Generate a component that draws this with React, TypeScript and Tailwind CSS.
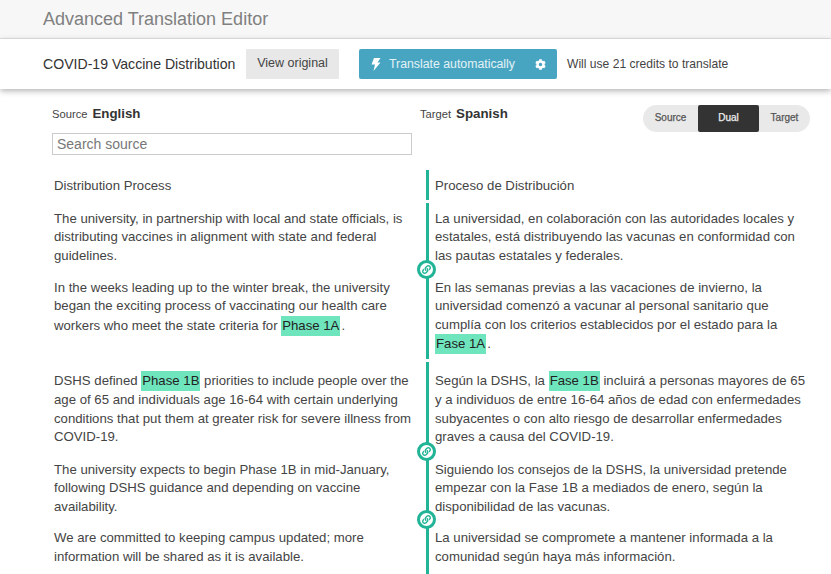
import { FaCog, FaLink } from "react-icons/fa";

const Mark = ({ children }: { children: string }) => (
    <span className="inline-block h-5 leading-5 px-px bg-[#6fe5bd] text-[#222]">{children}</span>
);

const Period = () => <span className="ml-[1px]">.</span>;

const LinkDot = () => (
    <span className="absolute left-[-12px] bottom-[-6px] z-10 w-[19px] h-[19px] rounded-full bg-white border-[3px] border-[#21b496] flex items-center justify-center text-[#21b496]">
        <FaLink size={9} />
    </span>
);

function Row({ left, right, top, linked = false, }: {
    left: React.ReactNode; right: React.ReactNode; top: string; linked?: boolean;
}) {
    return (
        <div className="grid grid-cols-[426px_1fr]">
            <div className={`pl-[54px] pr-[14px] ${top}`}>{left}</div>
            <div className={`relative border-l-[3px] border-[#21b496] pl-[6px] pr-[22px] ${top}`}>
                {right}
                {linked && <LinkDot />}
            </div>
        </div>
    );
}

export default function App() {
    return (
        <div className="h-[574px] overflow-hidden bg-white text-[#444] font-['Liberation_Sans',Arial,sans-serif] text-[13.2px] leading-[18.5px]">
            {/* Title */}
            <div className="h-[39px] bg-[#f7f7f7] border-b border-[#e4e4e4] pl-[43px] pt-[8px] text-[18px] leading-[22px] text-[#808080]">
                Advanced Translation Editor
            </div>

            {/* Toolbar */}
            <div className="relative z-20 h-[50px] bg-white shadow-[0_2px_6px_rgba(0,0,0,0.3)] flex items-center pl-[43px]">
                <span className="w-[193px] text-[14.1px] text-[#333] whitespace-nowrap">COVID-19 Vaccine Distribution</span>
                <button className="ml-[10px] w-[93px] h-[30px] mb-[1px] bg-[#e8e8e8] text-[12.5px] text-[#444] rounded-[1px]">View original</button>
                <button className="ml-[20px] w-[198px] h-[30px] bg-[#47a5c1] text-white/85 text-[12.3px] rounded-[2px] flex items-center pl-[12px]">
                    <svg width="10" height="13" viewBox="0 0 10 13" className="text-white" fill="currentColor">
                        <polygon points="3,0 9.5,0 6.5,4.5 9.5,4.5 2.5,13 4,6.5 0.5,6.5" />
                    </svg>
                    <span className="ml-[8px]">Translate automatically</span>
                    <FaCog size={11} className="ml-[20px] text-white" />
                </button>
                <span className="ml-[10px] text-[12.1px] text-[#444]">Will use 21 credits to translate</span>
            </div>

            {/* Languages */}
            <div className="relative pt-[16px] h-[81px]">
                <div className="grid grid-cols-[420px_1fr]">
                    <div className="pl-[52px] flex flex-col">
                        <div className="flex items-baseline gap-[5px] h-[20px]">
                            <span className="text-[11.2px]">Source</span>
                            <span className="text-[13.3px] font-bold text-[#333]">English</span>
                        </div>
                        <input
                            readOnly
                            placeholder="Search source"
                            className="mt-[8px] w-[360px] h-[22px] border border-[#ccc] px-[4px] text-[14px] outline-none placeholder:text-[#777]"
                        />
                    </div>
                    <div className="flex items-start justify-between pr-[21px]">
                        <div className="flex items-baseline gap-[5px] h-[20px]">
                            <span className="text-[11.2px]">Target</span>
                            <span className="text-[13.3px] font-bold text-[#333]">Spanish</span>
                        </div>
                        <div className="flex h-[27px] text-[10px] [-webkit-text-stroke:0.25px] rounded-full bg-[#e9e9e9] text-[#555] items-center">
                            <span className="w-[55px] text-center">Source</span>
                            <span className="w-[61px] h-full flex items-center justify-center bg-[#333] text-[#eee] rounded-[2px]">Dual</span>
                            <span className="w-[51px] text-center">Target</span>
                        </div>
                    </div>
                </div>
            </div>

            {/* Segments */}
            <div className="flex flex-col gap-[3px]">
                <Row top="pt-[7px] pb-[4px]" left="Distribution Process" right="Proceso de Distribución" />
                <div>
                    <Row
                        top="pt-[7px] pb-[8px]"
                        linked
                        left="The university, in partnership with local and state officials, is distributing vaccines in alignment with state and federal guidelines."
                        right="La universidad, en colaboración con las autoridades locales y estatales, está distribuyendo las vacunas en conformidad con las pautas estatales y federales."
                    />
                    <Row
                        top="pt-[5.6px] pb-[5.4px]"
                        left={<>In the weeks leading up to the winter break, the university began the exciting process of vaccinating our health care workers who meet the state criteria for <Mark>Phase 1A</Mark><Period /></>}
                        right={<>En las semanas previas a las vacaciones de invierno, la universidad comenzó a vacunar al personal sanitario que cumplía con los criterios establecidos por el estado para la <Mark>Fase 1A</Mark><Period /></>}
                    />
                </div>
                <div>
                    <Row
                        top="pt-[9px] pb-[8px]"
                        linked
                        left={<>DSHS defined <Mark>Phase 1B</Mark> priorities to include people over the age of 65 and individuals age 16-64 with certain underlying conditions that put them at greater risk for severe illness from COVID-19.</>}
                        right={<>Según la DSHS, la <Mark>Fase 1B</Mark> incluirá a personas mayores de 65 y a individuos de entre 16-64 años de edad con enfermedades subyacentes o con alto riesgo de desarrollar enfermedades graves a causa del COVID-19.</>}
                    />
                    <Row
                        top="pt-[6px] pb-[7px]"
                        linked
                        left="The university expects to begin Phase 1B in mid-January, following DSHS guidance and depending on vaccine availability."
                        right="Siguiendo los consejos de la DSHS, la universidad pretende empezar con la Fase 1B a mediados de enero, según la disponibilidad de las vacunas."
                    />
                    <Row
                        top="pt-[6px] pb-[10px]"
                        left="We are committed to keeping campus updated; more information will be shared as it is available."
                        right="La universidad se compromete a mantener informada a la comunidad según haya más información."
                    />
                </div>
            </div>
        </div>
    );
}
